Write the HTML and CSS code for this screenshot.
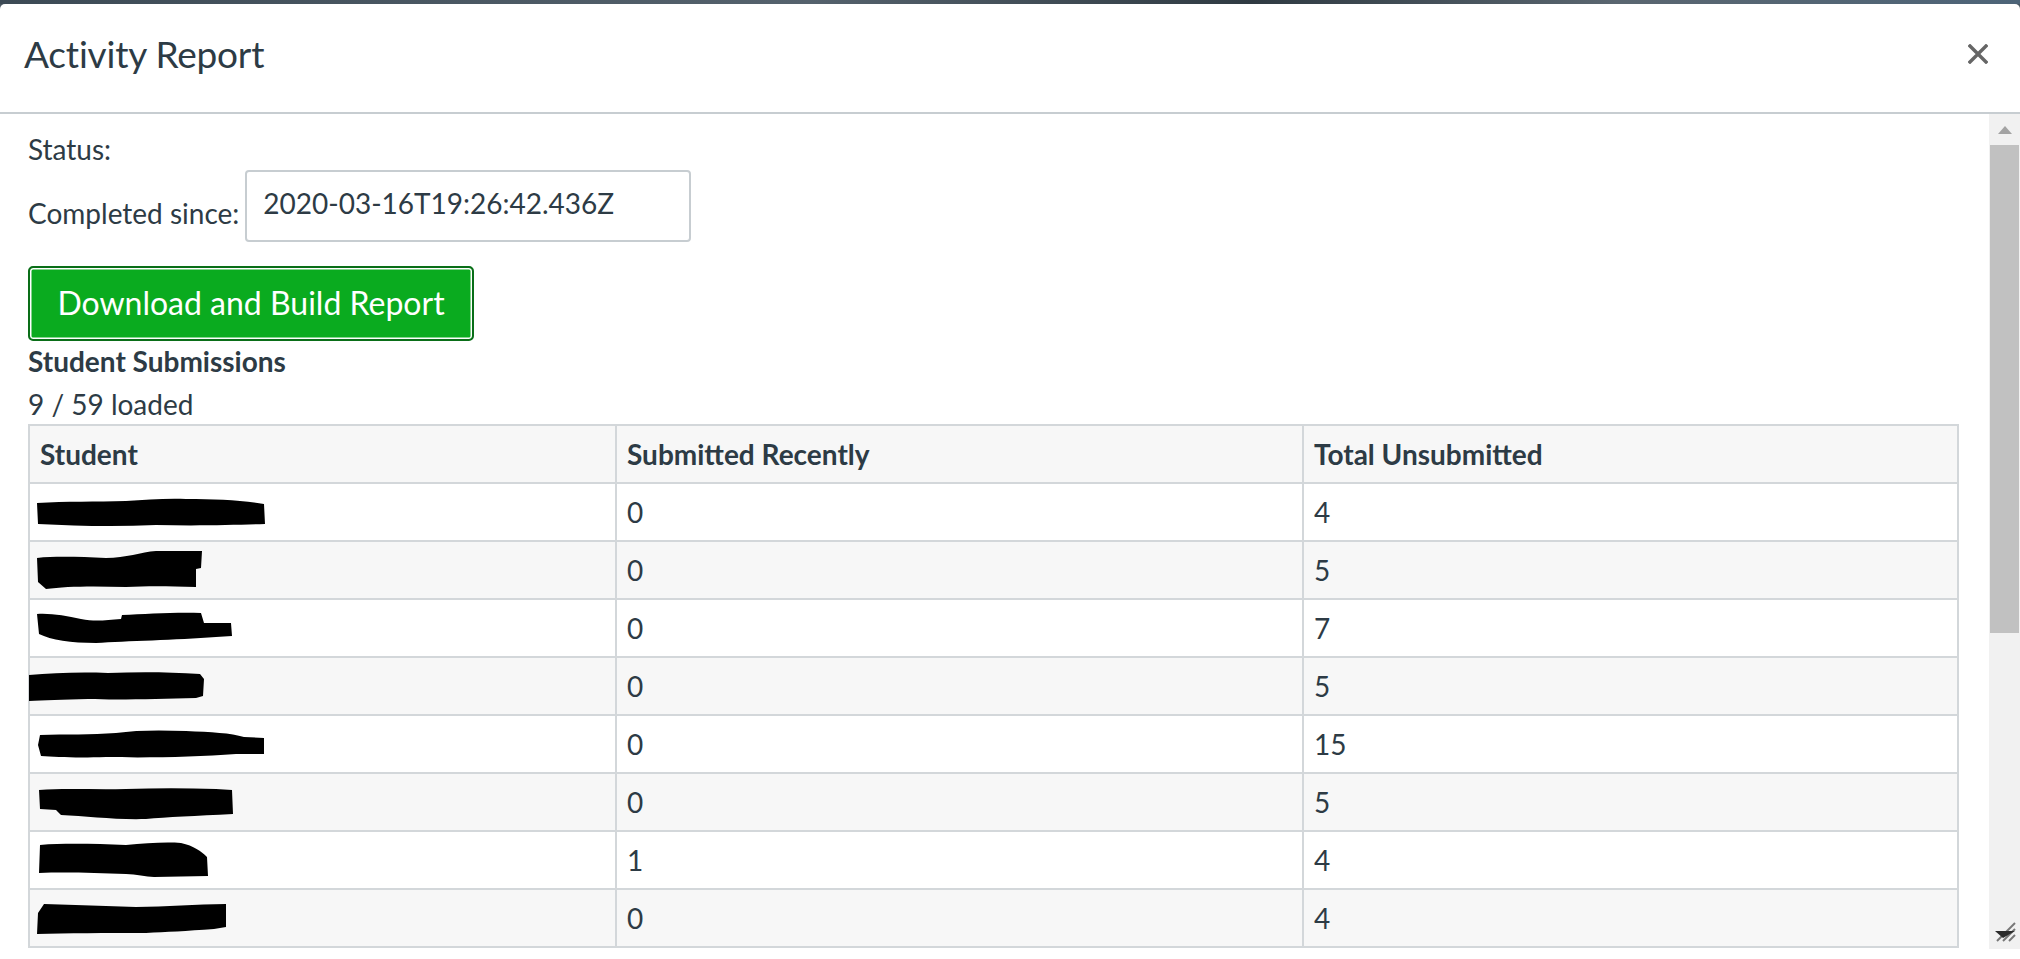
FILE: index.html
```html
<!DOCTYPE html>
<html lang="en">
<head>
<meta charset="utf-8">
<title>Activity Report</title>
<link rel="stylesheet" href="styles.css">
</head>
<body>
<div class="backdrop"></div>
<div class="dialog">
  <div class="dialog-header">
    <h1 class="dialog-title">Activity Report</h1>
    <button class="close-btn" aria-label="Close">
      <svg width="20" height="20" viewBox="0 0 20 20"><path d="M2 2 L18 18 M18 2 L2 18" stroke="#666" stroke-width="3.4" stroke-linecap="square"/></svg>
    </button>
  </div>
  <div class="dialog-body">
    <div class="content">
      <div class="line">Status:</div>
      <div class="since-row">
        <label class="since-label">Completed since:</label>
        <div class="since-input">2020-03-16T19:26:42.436Z</div>
      </div>
      <button class="build-btn">Download and Build Report</button>
      <div class="line bold">Student Submissions</div>
      <div class="line loaded">9 / 59 loaded</div>
      <table class="report">
        <colgroup><col class="c1"><col class="c2"><col class="c3"></colgroup>
        <thead>
          <tr><th>Student</th><th>Submitted Recently</th><th>Total Unsubmitted</th></tr>
        </thead>
        <tbody>
          <tr><td><svg class="blob" width="232" height="32" viewBox="0 0 232 32"><path d="M1 7 C30 5 60 6 90 5 C110 4 130 2 150 3 C180 3 205 4 228 8 L229 28 C200 29 160 30 120 29 C80 31 40 30 2 28 Z"/></svg></td><td>0</td><td>4</td></tr>
          <tr><td><svg class="blob" width="168" height="40" viewBox="0 0 168 40"><path d="M1 8 C20 6 45 7 70 8 C90 8 105 2 120 1 L166 1 L165 18 L160 19 L160 37 C130 36 110 36 90 37 C60 36 30 36 10 39 L2 32 Z"/></svg></td><td>0</td><td>5</td></tr>
          <tr><td><svg class="blob" width="208" height="36" viewBox="0 0 208 36"><path d="M1 4 C15 3 30 6 45 9 C60 12 70 10 85 9 L86 5 C110 4 140 2 165 3 L168 13 L195 13 L196 26 L180 27 C140 30 90 31 60 33 C35 33 15 30 3 24 Z"/></svg></td><td>0</td><td>7</td></tr>
          <tr><td><svg class="blob shift" width="178" height="34" viewBox="0 0 178 34"><path d="M1 6 C25 4 50 3 80 4 C110 3 140 3 172 5 L176 10 L175 27 L168 29 C130 30 90 31 60 30 C35 31 15 31 1 32 Z"/></svg></td><td>0</td><td>5</td></tr>
          <tr><td><svg class="blob" width="230" height="34" viewBox="0 0 230 34"><path d="M4 8 C30 7 55 8 80 6 C100 3 125 3 150 4 C175 5 195 6 208 10 L228 11 L228 27 L200 27 C160 30 110 31 70 30 C40 31 20 30 5 29 L2 18 Z"/></svg></td><td>0</td><td>15</td></tr>
          <tr><td><svg class="blob" width="200" height="36" viewBox="0 0 200 36"><path d="M3 6 C30 4 60 6 90 5 C120 4 150 4 180 5 L196 6 L197 30 C160 32 130 33 110 35 C80 36 50 32 25 31 L20 26 L4 25 Z"/></svg></td><td>0</td><td>5</td></tr>
          <tr><td><svg class="blob" width="176" height="38" viewBox="0 0 176 38"><path d="M4 4 C30 2 60 3 90 4 C110 2 130 1 145 2 C158 5 165 10 171 16 L172 35 L118 36 C110 36 100 33 90 33 C60 32 30 31 3 32 Z"/></svg></td><td>1</td><td>4</td></tr>
          <tr><td><svg class="blob" width="194" height="34" viewBox="0 0 194 34"><path d="M8 3 C40 4 70 5 100 6 C130 6 160 3 190 3 L190 26 L178 28 C150 30 130 31 110 32 C70 32 30 32 1 33 L2 12 Z"/></svg></td><td>0</td><td>4</td></tr>
        </tbody>
      </table>
    </div>
    <div class="scrollbar">
      <div class="sb-arrow"><svg width="14" height="8" viewBox="0 0 14 8"><path d="M7 0 L14 8 L0 8 Z" fill="#a3a3a3"/></svg></div>
      <div class="sb-thumb"></div>
      <div class="sb-rest">
        <svg class="grip" width="24" height="24" viewBox="0 0 24 24">
          <path d="M4 22 L22 4" stroke="#777" stroke-width="2"/>
          <path d="M10 22 L22 10" stroke="#777" stroke-width="2"/>
          <path d="M16 22 L22 16" stroke="#777" stroke-width="2"/>
          <path d="M2 12 L22 12 L10 19 Z" fill="#2b2b2b"/>
        </svg>
      </div>
    </div>
  </div>
</div>
</body>
</html>
```
FILE: styles.css
```css
* { box-sizing: border-box; }
html, body { margin: 0; padding: 0; }
body {
  width: 2020px;
  height: 959px;
  overflow: hidden;
  background: #4b5862;
  font-family: Lato, "Open Sans", sans-serif;
  color: #2d3b45;
}
.backdrop {
  height: 4px;
  background: linear-gradient(90deg, #3c4a55 0%, #55626d 40%, #2f3a42 62%, #5a6670 80%, #4d6478 100%);
}
.dialog {
  background: #fff;
  border-radius: 5px 5px 0 0;
  height: 955px;
  display: flex;
  flex-direction: column;
}
.dialog-header {
  height: 110px;
  border-bottom: 2px solid #c7cdd1;
  display: flex;
  align-items: center;
  justify-content: space-between;
  padding: 0 32px 9px 24px;
  flex: none;
}
.dialog-title {
  margin: 0;
  font-weight: 400;
  font-size: 37px;
  color: #2d3b45;
  letter-spacing: -0.2px;
}
.close-btn {
  border: 0;
  background: none;
  padding: 0;
  width: 20px;
  height: 20px;
  display: flex;
}
.dialog-body {
  flex: 1;
  display: flex;
  padding-bottom: 10px;
  min-height: 0;
}
.content {
  flex: 1;
  padding: 15px 32px 0 28px;
  font-size: 28px;
  overflow: hidden;
}
.line {
  line-height: 40px;
  height: 40px;
}
.loaded { margin-top: 3px; }
.bold { font-weight: 700; }
.since-row {
  display: flex;
  align-items: flex-start;
  gap: 6px;
  margin-top: 1px;
}
.since-label {
  line-height: 40px;
  margin-top: 23px;
}
.since-input {
  width: 446px;
  height: 72px;
  border: 2px solid #c7cdd1;
  border-radius: 4px;
  padding: 0 16px;
  line-height: 62px;
  font-size: 28px;
  color: #2d3b45;
}
.build-btn {
  display: block;
  margin-top: 24px;
  width: 446px;
  height: 75px;
  background: #0aab1f;
  color: #fff;
  border: 2px solid #0a6e18;
  box-shadow: inset 0 0 0 1.5px #fff;
  border-radius: 5px;
  font-family: Lato, "Open Sans", sans-serif;
  font-size: 32px;
  padding: 0 0 2px;
}
.report {
  width: 1929px;
  border-collapse: collapse;
  border: 2px solid #d3d7da;
  table-layout: fixed;
}
.report .c1 { width: 587px; }
.report .c2 { width: 687px; }
.report .c3 { width: 655px; }
.report th, .report td {
  border: 2px solid #d3d7da;
  height: 58px;
  padding: 0 10px;
  text-align: left;
  vertical-align: middle;
  font-size: 28px;
  line-height: 40px;
}
.report th { font-weight: 700; background: #f7f7f7; }
.report tbody tr:nth-child(even) td { background: #f7f7f7; }
.report tbody td:first-child { padding: 0 0 0 6px; }
.blob { display: block; fill: #000; }
.blob.shift { margin-left: -8px; }
.scrollbar {
  width: 31px;
  flex: none;
  background: #f1f1f1;
  display: flex;
  flex-direction: column;
  align-items: center;
}
.sb-arrow {
  height: 31px;
  display: flex;
  align-items: center;
  justify-content: center;
}
.sb-thumb {
  width: 29px;
  height: 488px;
  background: #c1c1c1;
}
.sb-rest {
  flex: 1;
  width: 100%;
  display: flex;
  align-items: flex-end;
  justify-content: center;
  padding-bottom: 6px;
}
.grip { display: block; }
```
